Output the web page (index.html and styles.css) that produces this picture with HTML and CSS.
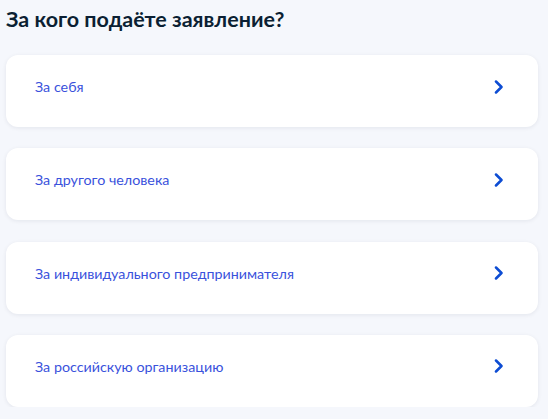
FILE: index.html
```html
<!DOCTYPE html>
<html lang="ru">
<head>
    <meta charset="UTF-8">
    <meta name="viewport" content="width=device-width, initial-scale=1.0">
    <title>За кого подаёте заявление?</title>
    <link rel="stylesheet" href="styles.css">
</head>
<body>
    <div class="applicant">
        <h2 class="applicant-title">За кого подаёте заявление?</h2>
        <div class="choice-list">
            <a class="choice" href="#">
                <span class="choice-text">За себя</span>
                <svg class="choice-arrow" width="10" height="14" viewBox="0 0 10 14"><path d="M2 1.5 L7.5 7 L2 12.5" fill="none" stroke="#0d4cd3" stroke-width="2.5" stroke-linecap="round" stroke-linejoin="round"/></svg>
            </a>
            <a class="choice" href="#">
                <span class="choice-text">За другого человека</span>
                <svg class="choice-arrow" width="10" height="14" viewBox="0 0 10 14"><path d="M2 1.5 L7.5 7 L2 12.5" fill="none" stroke="#0d4cd3" stroke-width="2.5" stroke-linecap="round" stroke-linejoin="round"/></svg>
            </a>
            <a class="choice" href="#">
                <span class="choice-text">За индивидуального предпринимателя</span>
                <svg class="choice-arrow" width="10" height="14" viewBox="0 0 10 14"><path d="M2 1.5 L7.5 7 L2 12.5" fill="none" stroke="#0d4cd3" stroke-width="2.5" stroke-linecap="round" stroke-linejoin="round"/></svg>
            </a>
            <a class="choice" href="#">
                <span class="choice-text">За российскую организацию</span>
                <svg class="choice-arrow" width="10" height="14" viewBox="0 0 10 14"><path d="M2 1.5 L7.5 7 L2 12.5" fill="none" stroke="#0d4cd3" stroke-width="2.5" stroke-linecap="round" stroke-linejoin="round"/></svg>
            </a>
        </div>
    </div>
</body>
</html>
```

FILE: styles.css
```css
body {
    margin: 0;
    padding: 0;
    font-family: Lato, "Noto Sans", sans-serif;
    background: #f5f7fc;
}

.applicant {
    padding: 5px 10px 0 6px;
}

.applicant-title {
    margin: 0 0 21px;
    font-size: 21.5px;
    line-height: 29px;
    font-weight: 700;
    color: #0b1f33;
}

.choice-list {
    display: flex;
    flex-direction: column;
    gap: 21.3px;
}

.choice {
    display: flex;
    align-items: center;
    justify-content: space-between;
    height: 72px;
    padding: 0 34px 9px 29px;
    background: #fff;
    border-radius: 12px;
    box-shadow: 0 1px 4px rgba(11, 31, 51, 0.08);
    text-decoration: none;
    box-sizing: border-box;
}

.choice-text {
    font-size: 14.3px;
    color: #3a52dc;
}

.choice-arrow {
    display: block;
}
```
